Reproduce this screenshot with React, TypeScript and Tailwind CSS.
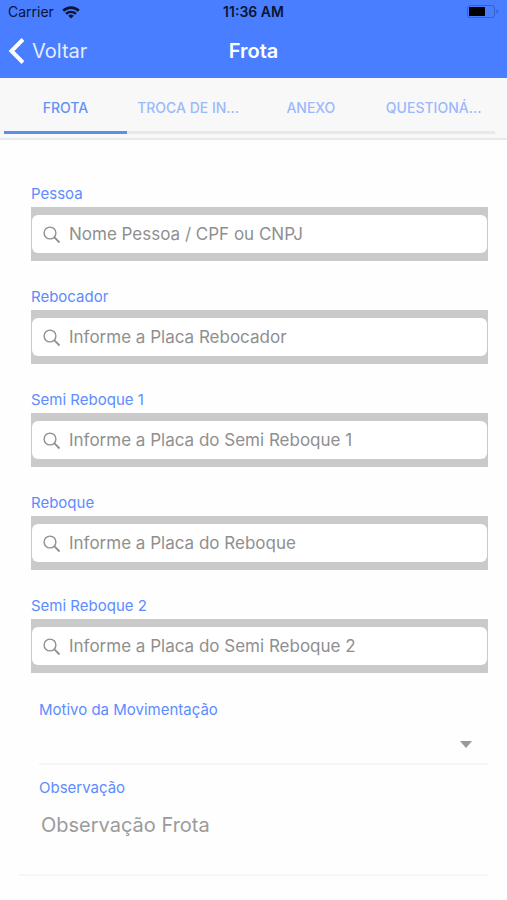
import { clsx } from "clsx";
import { useState } from "react";

const tabs = ["FROTA", "TROCA DE IN...", "ANEXO", "QUESTIONÁ..."];

const searchFields = [
  { id: "pessoa", label: "Pessoa", placeholder: "Nome Pessoa / CPF ou CNPJ" },
  {
    id: "rebocador",
    label: "Rebocador",
    placeholder: "Informe a Placa Rebocador",
  },
  {
    id: "semi-reboque-1",
    label: "Semi Reboque 1",
    placeholder: "Informe a Placa do Semi Reboque 1",
  },
  { id: "reboque", label: "Reboque", placeholder: "Informe a Placa do Reboque" },
  {
    id: "semi-reboque-2",
    label: "Semi Reboque 2",
    placeholder: "Informe a Placa do Semi Reboque 2",
  },
];

function WifiIcon() {
  return (
    <svg width="18" height="13" viewBox="0 0 18 13" fill="none" aria-hidden="true">
      <path d="M1.2 4.8a11.2 11.2 0 0 1 15.6 0" stroke="#0b1533" strokeWidth="2.6" />
      <path d="M4 7.8a7.2 7.2 0 0 1 10 0" stroke="#0b1533" strokeWidth="2.3" />
      <path d="M9 12.6 6.2 9.8a4 4 0 0 1 5.6 0z" fill="#0b1533" />
    </svg>
  );
}

function BatteryIcon() {
  return (
    <svg width="32" height="14" viewBox="0 0 32 14" fill="none" aria-hidden="true">
      <rect x="0.5" y="0.5" width="27" height="12" rx="2.5" stroke="#3462c9" />
      <rect x="2" y="2" width="16" height="9" rx="0.5" fill="#000" />
      <path d="M29.5 4.5v4c1.2-.4 1.8-1.1 1.8-2s-.6-1.6-1.8-2z" fill="#3462c9" />
    </svg>
  );
}

function BackIcon() {
  return (
    <svg width="16" height="26" viewBox="0 0 16 26" fill="none" aria-hidden="true">
      <path d="M15 1.5 3.5 13 15 24.5" stroke="#fff" strokeWidth="4" />
    </svg>
  );
}

function SearchIcon() {
  return (
    <svg
      width="18"
      height="18"
      viewBox="0 0 18 18"
      fill="none"
      stroke="#8f8f8f"
      strokeWidth="1.4"
      className="shrink-0"
      aria-hidden="true"
    >
      <circle cx="7" cy="7" r="5.9" />
      <path d="m11.2 11.2 5.3 5.3" strokeWidth="1.8" />
    </svg>
  );
}

type SearchFieldProps = {
  id: string;
  label: string;
  placeholder: string;
};

function SearchField({ id, label, placeholder }: SearchFieldProps) {
  return (
    <div className="flex flex-col gap-0.5">
      <label htmlFor={id} className="text-[15px] leading-[22px] text-[#5c8cff]">
        {label}
      </label>

      <div className="bg-[#cacaca] px-px py-2">
        <div className="flex h-[38px] items-center gap-2 rounded-md bg-white pt-0.5 pl-[11px]">
          <SearchIcon />
          <input
            id={id}
            type="text"
            placeholder={placeholder}
            className="min-w-0 flex-1 bg-transparent text-[17px] text-gray-700 outline-none placeholder:text-[#8f8f8f]"
          />
        </div>
      </div>
    </div>
  );
}

export default function App() {
  const [activeTab, setActiveTab] = useState("FROTA");

  return (
    <div className="min-h-screen bg-[#fefefe] font-['Inter','Liberation_Sans',sans-serif]">
      <header className="bg-[#487eff]">
        <div className="grid h-6 grid-cols-3 items-center px-2 text-sm text-[#0b1533]">
          <div className="flex items-center gap-2">
            Carrier <WifiIcon />
          </div>
          <span className="text-center font-semibold">11:36 AM</span>
          <div className="flex justify-end">
            <BatteryIcon />
          </div>
        </div>

        <div className="grid h-[54px] grid-cols-3 items-center px-2">
          <button
            type="button"
            className="flex items-center gap-2 text-xl text-[#e4ecff]"
          >
            <BackIcon />
            Voltar
          </button>
          <h1 className="text-center text-xl font-semibold text-white">Frota</h1>
        </div>
      </header>

      <nav className="border-b-2 border-[#e9e9e9] bg-[#f8f8f8] pr-3 pb-1 pl-1">
        <div className="grid grid-cols-4">
          {tabs.map((tab) => (
            <button
              key={tab}
              type="button"
              onClick={() => setActiveTab(tab)}
              className={clsx(
                "h-14 border-b-3 pt-1.5 text-sm font-medium whitespace-nowrap",
                activeTab === tab
                  ? "border-[#5c8eec] text-[#6493f5]"
                  : "border-[#e9e9e9] text-[#9cb9fb]",
              )}
            >
              {tab}
            </button>
          ))}
        </div>
      </nav>

      <form className="pt-[43px] pr-[19px] pb-6 pl-[31px]">
        <div className="flex flex-col gap-[25px]">
          {searchFields.map((field) => (
            <SearchField key={field.id} {...field} />
          ))}
        </div>

        <div className="mt-[26px] ml-2 flex flex-col border-b-2 border-[#f6f6f6]">
          <label
            htmlFor="motivo"
            className="text-[15px] leading-[22px] text-[#5c8cff]"
          >
            Motivo da Movimentação
          </label>
          <div className="flex h-[42px] items-center pt-1 pr-4">
            <select
              id="motivo"
              className="h-full min-w-0 flex-1 appearance-none bg-transparent text-lg text-gray-700 outline-none"
            >
              <option value=""></option>
            </select>
            <svg width="12" height="7" viewBox="0 0 12 7" aria-hidden="true">
              <path d="M0 0h12L6 7z" fill="#999" />
            </svg>
          </div>
        </div>

        <div className="-ml-3 flex flex-col border-b-2 border-[#f6f6f6] pt-3 pl-5">
          <label
            htmlFor="observacao"
            className="text-[15px] leading-[22px] text-[#5c8cff]"
          >
            Observação
          </label>
          <textarea
            id="observacao"
            placeholder="Observação Frota"
            className="h-[75px] resize-none bg-transparent px-0.5 pt-3 text-xl leading-7 text-gray-700 outline-none placeholder:text-[#9b9b9b]"
          />
        </div>
      </form>
    </div>
  );
}
